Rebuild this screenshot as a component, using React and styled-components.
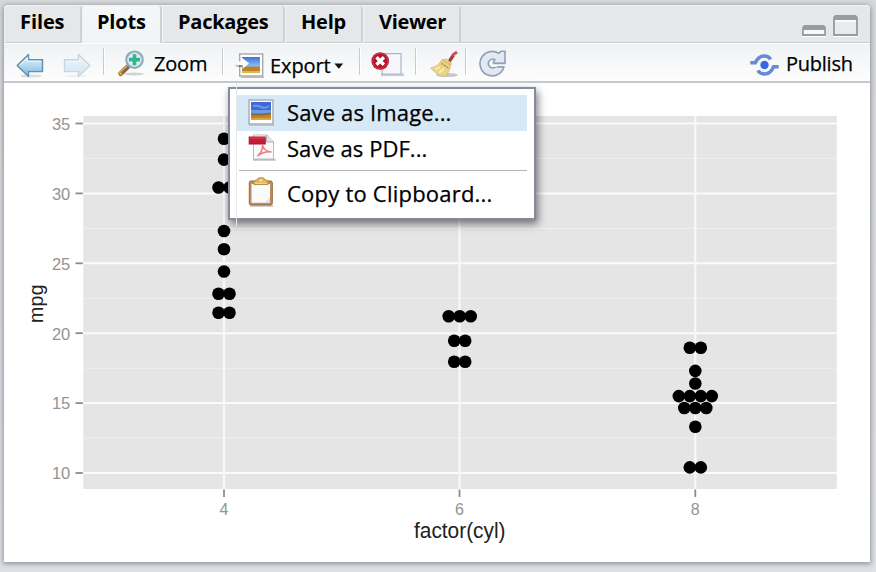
import React from "react";
import styled, { createGlobalStyle } from "styled-components";

const GlobalStyle = createGlobalStyle`
  * { box-sizing: border-box; }
  body { margin: 0; overflow: hidden; background: #dcdee2; }
`;

const Desktop = styled.div`
  width: 876px;
  height: 572px;
  padding: 5px 6px 9px 4px;
  background: linear-gradient(#d8d9dd, #dfe1e6);
  font-family: "Open Sans", "Noto Sans", sans-serif;
  color: #000;
`;

const Pane = styled.section`
  display: flex;
  flex-direction: column;
  width: 866px;
  height: 557px;
  background: #fff;
  border-radius: 4px 4px 0 0;
  box-shadow: 0 1px 5px 1px rgba(70, 72, 84, 0.5);
`;

const TabBar = styled.header`
  display: flex;
  align-items: stretch;
  height: 38px;
  background: #e6e7e9;
  border-top: 1px solid #f3f3f4;
  border-radius: 4px 4px 0 0;
  box-shadow: inset 0 -1px #cbccce;
`;

const Tab = styled.button`
  flex: none;
  width: ${(p) => p.$width}px;
  padding: 0 0 6px ${(p) => p.$indent}px;
  border: 0;
  border-right: 2px solid #cfd0d2;
  border-left: 1px solid #f0f1f2;
  border-radius: 3px 3px 0 0;
  background: ${(p) => (p.$active ? "linear-gradient(#f5f6f8, #f0f3f5)" : "transparent")};
  box-shadow: ${(p) => (p.$active ? "0 1px #f0f3f5" : "inset 0 -1px #cbccce")};
  color: #000;
  font: 700 20px/30px "Open Sans", "Noto Sans", sans-serif;
  letter-spacing: ${(p) => p.$track}px;
  text-align: left;
  white-space: nowrap;
`;

const WindowControls = styled.div`
  display: flex;
  align-items: flex-end;
  gap: 7px;
  margin: 0 12px 6px auto;
`;

const Toolbar = styled.nav`
  display: flex;
  align-items: center;
  flex: none;
  height: 40px;
  padding-right: 17px;
  border-top: 1px solid #fff;
  border-bottom: 2px solid #c5cacf;
  background: linear-gradient(#eff2f4, #fdfdfd);
`;

const Separator = styled.i`
  flex: none;
  width: 2px;
  height: 27px;
  margin: 0 0 2px ${(p) => p.$gap}px;
  border-left: 1px solid #c9cbce;
  border-right: 1px solid #fff;
`;

const Action = styled.button`
  display: flex;
  align-items: center;
  flex: none;
  margin: ${(p) => p.$drop || 0}px 0 0 ${(p) => p.$gap}px;
  padding: 0;
  border: 0;
  background: none;
  color: #000;
`;

const Caption = styled.span`
  width: ${(p) => p.$width}px;
  margin: ${(p) => p.$drop || 0}px 0 0 ${(p) => p.$gap}px;
  font: 400 20px/28px "Open Sans", "Noto Sans", sans-serif;
  letter-spacing: ${(p) => p.$track}px;
  text-align: left;
  white-space: nowrap;
  -webkit-text-stroke: 0.25px #000;
`;

const Spacer = styled.div`
  flex: 1;
`;

const PlotArea = styled.main`
  position: relative;
  flex: 1;
`;

const Menu = styled.div`
  position: absolute;
  top: 4px;
  left: 224px;
  width: 308px;
  height: 133px;
  padding: 6px 7px 0;
  border: 2px solid #858a9e;
  background: #fff;
  box-shadow: 2px 4px 8px rgba(0, 0, 0, 0.5);
  &::before {
    content: "";
    position: absolute;
    top: -6px;
    left: 6px;
    width: 1px;
    height: 143px;
    background: #e8e9eb;
  }
`;

const MenuItem = styled.div`
  display: flex;
  align-items: center;
  height: 36px;
  padding-left: 11px;
  background: ${(p) => (p.$selected ? "#d7e8f6" : "transparent")};
`;

const MenuGlyph = styled.span`
  display: flex;
  flex: none;
  width: 28px;
  margin-bottom: ${(p) => p.$raise || 0}px;
`;

const MenuLabel = styled.span`
  margin: 0 0 2px 11px;
  font: 400 22px/34px "Open Sans", "Noto Sans", sans-serif;
  letter-spacing: ${(p) => p.$track}px;
  white-space: nowrap;
  -webkit-text-stroke: 0.25px #000;
`;

const MenuRule = styled.hr`
  height: 1px;
  margin: 3px 0 5px 2px;
  border: 0;
  background: #b5b5b5;
`;

const Svg = styled.svg`
  display: block;
  flex: none;
  overflow: visible;
`;

const Arrow = ({ flip, faded }) => (
  <Svg width="28" height="26" viewBox="0 0 28 26" opacity={faded ? 0.32 : 1}>
    <defs>
      <linearGradient id="arrowFill" x2="0" y2="1">
        <stop stopColor="#e1f2fb" />
        <stop offset=".5" stopColor="#b5d9ef" />
        <stop offset="1" stopColor="#7fb3d6" />
      </linearGradient>
    </defs>
    <g transform={flip ? "matrix(-1 0 0 1 28 0)" : undefined}>
      <ellipse cx="15" cy="23" rx="11" ry="1.6" fill="#888" opacity=".25" />
      <path d="M1.2 12.5 12.5 1.6V6.7H26.5V18.6H12.5V23.4Z" fill="url(#arrowFill)" stroke="#5f8fb3" strokeWidth="1.4" strokeLinejoin="round" />
      <path d="M3.7 12.5 11.3 5V8.2H25" fill="none" stroke="#f1faff" strokeWidth="1" />
    </g>
  </Svg>
);

const Magnifier = () => (
  <Svg width="27" height="28" viewBox="0 -1 27 28">
    <ellipse cx="16" cy="24" rx="10" ry="1.4" fill="#777" opacity=".3" />
    <path d="M2.8 23.5 9.5 17" stroke="#8c6547" strokeWidth="5" strokeLinecap="round" />
    <path d="M2.2 22.2 8.7 16" stroke="#c99d78" strokeWidth="1.8" strokeLinecap="round" />
    <path d="m1 22 3 3" stroke="#e6a822" strokeWidth="2.2" />
    <circle cx="16.5" cy="9.7" r="8.2" fill="#e2f1f5" stroke="#8fa9ba" strokeWidth="2.2" />
    <circle cx="16.5" cy="9.7" r="6.6" fill="none" stroke="#c9dfeb" />
    <path d="M16.5 4.2v11M11 9.7h11" stroke="#31b78f" strokeWidth="3.7" />
  </Svg>
);

const ImageIcon = () => (
  <Svg width="27" height="27" viewBox="0 0 27 27">
    <path d="M1 26H26" stroke="#888" strokeWidth="1.5" opacity=".45" />
    <rect x="1" y="1" width="24" height="24" fill="#fdfdfd" stroke="#b0b3b6" strokeWidth="1.6" />
    <path d="M3 3H23V15H3Z" fill="#3f68d8" />
    <path d="M3 11H23V15H3Z" fill="#6f9be6" />
    <path d="M5 7q4-1 8 1t8-1" stroke="#6f95e6" strokeWidth="2" fill="none" />
    <path d="M3 14.5H23V21H3Z" fill="#c08527" />
    <path d="M3 15.5H14l9-1" stroke="#856c3c" strokeWidth="1.8" fill="none" />
    <path d="M3 20H23" stroke="#dca441" strokeWidth="2" />
  </Svg>
);

const ExportIcon = () => (
  <Svg width="27" height="25" viewBox="0 -1 27 25">
    <defs>
      <linearGradient id="exportTail" gradientUnits="userSpaceOnUse" x1="-3" x2="7">
        <stop stopColor="#444" stopOpacity="0" />
        <stop offset="1" stopColor="#444" stopOpacity=".85" />
      </linearGradient>
      <linearGradient id="exportSky" x2="0" y2="1">
        <stop stopColor="#3f73de" />
        <stop offset="1" stopColor="#94c2f4" />
      </linearGradient>
    </defs>
    <path d="M4 24.2H27" stroke="#777" strokeWidth="1.5" opacity=".5" />
    <rect x="2.7" y="1" width="23" height="22" fill="#fff" stroke="#a5a9ae" strokeWidth="1.4" />
    <path d="M5 4h18v10H5z" fill="url(#exportSky)" />
    <path d="M5 13.5h18V20H5z" fill="#b98428" />
    <path d="M5 18h18v2H5z" fill="#dfb452" />
    <path d="M-2 12.8H6V15" stroke="url(#exportTail)" strokeWidth="2.6" fill="none" />
    <path d="M0 8.5H5V4.8L12 10.3 5.5 16V12H0Z" fill="#fff" />
  </Svg>
);

const Caret = () => (
  <Svg width="10" height="6" viewBox="0 0 10 6">
    <path d="M.4.5H9.2L4.8 5.7Z" fill="#111" />
  </Svg>
);

const RemoveIcon = () => (
  <Svg width="34" height="26" viewBox="0 0 34 26">
    <path d="M10 23.8H33" stroke="#777" strokeWidth="2.6" opacity=".35" />
    <path d="M11 2.6H30V23H11Z" fill="#f5f7fc" stroke="#a9b6cc" strokeWidth="1.2" />
    <circle cx="9.2" cy="10" r="8.8" fill="#b9142b" />
    <circle cx="9.2" cy="10" r="7.6" fill="none" stroke="#cb4553" strokeWidth=".8" />
    <path d="m5.5 6.3 7.4 7.4m0-7.4-7.4 7.4" stroke="#fff" strokeWidth="3.4" />
  </Svg>
);

const Broom = () => (
  <Svg width="28" height="27" viewBox="0 0 28 27">
    <ellipse cx="17" cy="24" rx="11" ry="2" fill="#666" opacity=".35" />
    <path d="M18.5 11.5 23.5 4" stroke="#a93c3c" strokeWidth="3.2" />
    <path d="m22.5 4.2 4.5-3.2" stroke="#c5565a" strokeWidth="3" />
    <path d="M12 8.5 17 8.2 21.5 12.5 20 16.5C19.5 20 17 24.5 14 25.5Q6 23.5.7 17 9 15 12 8.5Z" fill="#ead486" stroke="#d0b66d" strokeWidth=".7" />
    <path d="m5 18.5 5-2.5m-1 6 5-4.5" stroke="#fbeeb0" strokeWidth="1.8" />
    <path d="m11.5 12.5 8 5" stroke="#b08048" strokeWidth="1.3" strokeDasharray="2 1" />
    <path d="m13 9.5 7.5 4.5" stroke="#c79a54" strokeWidth="1" strokeDasharray="2 1" />
  </Svg>
);

const Refresh = () => (
  <Svg width="27" height="27" viewBox="0 0 27 27">
    <path
      d="M19.8 3.4 22 1.2H26V13.4H14.5V11.2L16 9.8A4.3 4.3 0 1 0 15.8 17.2L18.3 16.7H25A12.2 12.2 0 1 1 19.8 3.4Z"
      fill="#e2e9f6"
      stroke="#959fb2"
      strokeWidth="1.6"
      strokeLinejoin="round"
    />
    <path d="M14.3 13.4H26L25 16.7H14.3Z" fill="#f6f8f9" />
    <path d="M14.5 13.4H26M18.3 16.7H25" stroke="#959fb2" strokeWidth="1.5" />
  </Svg>
);

const PublishIcon = () => (
  <Svg width="29" height="22" viewBox="0 -1 29 22">
    <g fill="none" stroke="#648bd3" strokeWidth="3.5">
      <path d="M.3 8.8H5.3C7.3 4.5 10 2 14 2q4.8 0 6.6 3.4" />
      <path d="M28.7 12.8H23.7C21.5 17.4 19 20 15 20q-5.4 0-7-3.6" />
    </g>
    <circle cx="14.5" cy="11" r="4.2" fill="#3769df" />
  </Svg>
);

const PdfIcon = () => (
  <Svg width="28" height="27" viewBox="0 0 28 27">
    <path d="M5 25.8H27.5" stroke="#777" strokeWidth="1.8" opacity=".5" />
    <path d="M5.5 1H19L25.5 8V25H5.5Z" fill="#fafafa" stroke="#b9bbbd" />
    <path d="M18.7 1V8H25.5" fill="#e6e7e8" stroke="#a8aaac" />
    <path d="M9.5 22C13 20 15 14 14.5 11q1 6 9 7-7-1-14 4Z" fill="none" stroke="#f07a80" strokeWidth="1.5" />
    <rect x="1.2" y="3" width="16" height="7" fill="#c51d35" stroke="#a9152c" />
    <path d="M2 4H17" stroke="#dc4a5c" />
  </Svg>
);

const Clipboard = () => (
  <Svg width="27" height="30" viewBox="0 0 27 30">
    <path d="M2 29H25" stroke="#777" strokeWidth="1.5" opacity=".45" />
    <rect x="1.3" y="4" width="23" height="24" rx="1.5" fill="#c08e5e" stroke="#96693f" />
    <path d="M3.5 7H22V25.8H3.5Z" fill="#f9fafb" />
    <path d="m22 20-5 5.8h5Z" fill="#dde0e5" />
    <path d="M6 7.5V4.6Q6 3 9 3 9 .7 13 .7T17 3q3 0 3 1.6v2.9Z" fill="#dfbb66" stroke="#b48b3d" />
    <path d="M7 6.5h12" stroke="#f0d48a" strokeWidth="1.2" />
    <circle cx="13" cy="3.3" r="1" fill="#fff3cb" />
  </Svg>
);

const Minimize = () => (
  <Svg width="24" height="12" viewBox="0 0 24 12">
    <path d="M0 11.5H24" stroke="#fff" />
    <path d="M1 10V2.5L2.5 1h19L23 2.5V10Z" fill="#f8f8f8" stroke="#999b9d" strokeWidth="1.8" />
    <path d="M1 5V2.5L2.5 1h19L23 2.5V5Z" fill="#999b9d" />
  </Svg>
);

const Maximize = () => (
  <Svg width="25" height="22" viewBox="0 0 25 22">
    <path d="M0 21.5H25" stroke="#fff" />
    <path d="M1 20V2.5L2.5 1h20L24 2.5V20Z" fill="#e9eaeb" stroke="#999b9d" strokeWidth="1.8" />
    <path d="M1 5V2.5L2.5 1h20L24 2.5V5Z" fill="#999b9d" />
    <path d="M2 6H23" stroke="#fff" strokeWidth="1.5" />
  </Svg>
);

const yTicks = [
  [35, 123.5], [30, 193.4], [25, 263.3], [20, 333.2], [15, 403.1], [10, 473],
];
const xTicks = [[4, 224], [6, 459.5], [8, 695.3]];
const stacks = [
  [224, 138.7, 1], [224, 159.6, 1], [224, 187.5, 2], [224, 231, 1], [224, 249.2, 1],
  [224, 271.5, 1], [224, 293.8, 2], [224, 312.7, 2],
  [459.7, 316.2, 3], [459.7, 340.8, 2], [459.7, 361.7, 2],
  [695.3, 347.8, 2], [695.3, 370.9, 1], [695.3, 383.5, 1], [695.3, 396.1, 4],
  [695.3, 408, 3], [695.3, 426.7, 1], [695.3, 467.4, 2],
];

const DotPlot = () => (
  <Svg width="866" height="479" viewBox="4 83 866 479" fontFamily="Liberation Sans, Arial, sans-serif">
    <rect x="83.3" y="116" width="753.5" height="373" fill="#e5e5e5" />
    {yTicks.map(([v, y]) => (
      <g key={v}>
        <path d={`M83.3 ${y}H836.8`} stroke="#fbfbfb" strokeWidth="2" />
        {v > 10 && <path d={`M83.3 ${y + 35}H836.8`} stroke="#efefef" strokeWidth="1" />}
        <path d={`M75.5 ${y}H82.8`} stroke="#8c8c8c" strokeWidth="1.8" />
        <text x="70.3" y={y + 6.3} fontSize="16.5" fill="#949494" textAnchor="end">{v}</text>
      </g>
    ))}
    {xTicks.map(([v, x]) => (
      <g key={v}>
        <path d={`M${x} 116V489`} stroke="#f8f8f8" strokeWidth="2.2" />
        <path d={`M${x} 489.5V497`} stroke="#8c8c8c" strokeWidth="1.8" />
        <text x={x} y="515" fontSize="16" fill="#949494" textAnchor="middle">{v}</text>
      </g>
    ))}
    {stacks.flatMap(([x, y, n]) =>
      Array.from({ length: n }, (_, i) => (
        <circle key={`${x}-${y}-${i}`} cx={x + (i - (n - 1) / 2) * 11} cy={y} r="6.3" />
      ))
    )}
    <text x="414" y="537.5" fontSize="21.5" fill="#222" textLength="91.5" lengthAdjust="spacingAndGlyphs">factor(cyl)</text>
    <text transform="translate(43 323) rotate(-90)" fontSize="19.5" fill="#222" textLength="38.5">mpg</text>
  </Svg>
);

export default function App() {
  return (
    <Desktop>
      <GlobalStyle />
      <Pane>
        <TabBar>
          <Tab $width={78} $indent={15} $track={-0.1}>Files</Tab>
          <Tab $width={80} $indent={14} $track={-0.2} $active>Plots</Tab>
          <Tab $width={123} $indent={15} $track={-0.25}>Packages</Tab>
          <Tab $width={78} $indent={15} $track={-0.2}>Help</Tab>
          <Tab $width={98} $indent={15} $track={-0.3}>Viewer</Tab>
          <WindowControls>
            <Minimize />
            <Maximize />
          </WindowControls>
        </TabBar>
        <Toolbar>
          <Action $gap={12} $drop={6} aria-label="Previous plot"><Arrow /></Action>
          <Action $gap={19} $drop={6} aria-label="Next plot"><Arrow flip faded /></Action>
          <Separator $gap={12} />
          <Action $gap={13}>
            <Magnifier />
            <Caption $gap={9} $drop={2} $width={54} $track={-0.2}>Zoom</Caption>
          </Action>
          <Separator $gap={14} />
          <Action $gap={13} $drop={3}>
            <ExportIcon />
            <Caption $gap={6} $drop={4} $width={61} $track={-0.1}>Export</Caption>
          </Action>
          <Action $gap={3} $drop={6} aria-label="Export options"><Caret /></Action>
          <Separator $gap={15} />
          <Action $gap={10} $drop={3} aria-label="Remove plot"><RemoveIcon /></Action>
          <Separator $gap={10} />
          <Action $gap={13} $drop={3} aria-label="Clear all plots"><Broom /></Action>
          <Separator $gap={7} />
          <Action $gap={12} $drop={1} aria-label="Refresh"><Refresh /></Action>
          <Spacer />
          <Action $gap={0} $drop={2}>
            <PublishIcon />
            <Caption $gap={7} $width={67} $track={-0.25}>Publish</Caption>
          </Action>
        </Toolbar>
        <PlotArea>
          <DotPlot />
          <Menu>
            <MenuItem $selected>
              <MenuGlyph $raise={1}><ImageIcon /></MenuGlyph>
              <MenuLabel $track={0.15}>Save as Image...</MenuLabel>
            </MenuItem>
            <MenuItem>
              <MenuGlyph $raise={3}><PdfIcon /></MenuGlyph>
              <MenuLabel $track={0.05}>Save as PDF...</MenuLabel>
            </MenuItem>
            <MenuRule />
            <MenuItem>
              <MenuGlyph $raise={4}><Clipboard /></MenuGlyph>
              <MenuLabel $track={0.22}>Copy to Clipboard...</MenuLabel>
            </MenuItem>
          </Menu>
        </PlotArea>
      </Pane>
    </Desktop>
  );
}
